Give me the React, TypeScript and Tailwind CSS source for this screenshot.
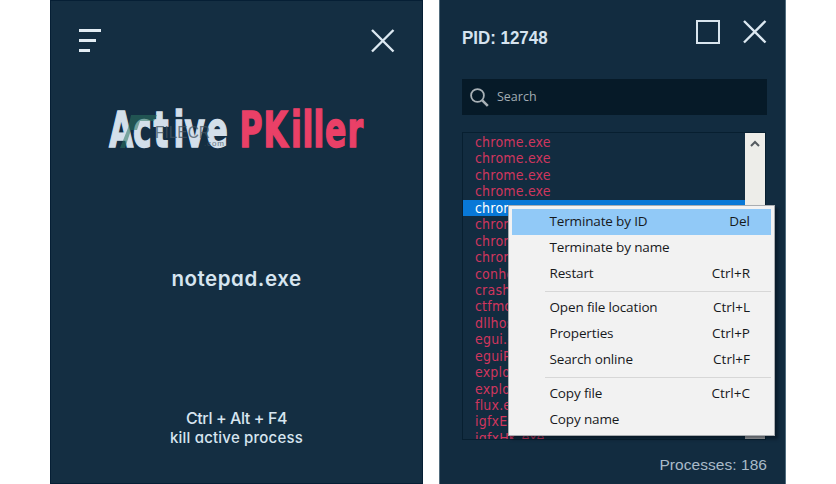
import React from "react";

const processes = [
  "chrome.exe", "chrome.exe", "chrome.exe", "chrome.exe", "chrome.exe",
  "chrome.exe", "chrome.exe", "chrome.exe", "conhost.exe", "crashpad.exe",
  "ctfmon.exe", "dllhost.exe", "egui.exe", "eguiProxy.exe", "explorer.exe",
  "explorer.exe", "flux.exe", "igfxEM.exe", "igfxHK.exe",
];

const menuGroups: [string, string][][] = [
  [["Terminate by ID", "Del"], ["Terminate by name", ""], ["Restart", "Ctrl+R"]],
  [["Open file location", "Ctrl+L"], ["Properties", "Ctrl+P"], ["Search online", "Ctrl+F"]],
  [["Copy file", "Ctrl+C"], ["Copy name", ""]],
];

const SQUEEZE = 0.7;
const place = (xs: number[]) => xs.map((x) => x / SQUEEZE).join(" ");

function Logo() {
  return (
    <svg width="272" height="48" viewBox="100 106 272 48" className="block overflow-visible">
      <g
        transform={`scale(${SQUEEZE} 1)`}
        fontSize="50"
        fontWeight="700"
        strokeWidth="1.4"
        strokeLinejoin="miter"
        className="font-['DejaVu_Sans_Condensed','DejaVu_Sans',sans-serif]"
      >
        <text x={place([109, 133, 153.500, 173.500, 184.5, 206.5])} y="147.500" fill="#d3dfea" stroke="#d3dfea">Active</text>
        <text x={place([239.5, 263.5, 291, 302.5, 313.5, 325, 347.5])} y="147.500" fill="#ea4067" stroke="#ea4067">PKiller</text>
      </g>
      <path d="M131 115h26l-3 6h-14l-3 9h-6l-6 18h-5l8-20z" fill="#2b7560" opacity=".55" />
      <g fill="#42525e" opacity=".75" className="font-['Liberation_Sans',sans-serif]">
        <text x="155" y="138" fontSize="17" textLength="55" lengthAdjust="spacingAndGlyphs">FILECR</text>
        <text x="204" y="145.500" fontSize="8" textLength="20">.com</text>
      </g>
    </svg>
  );
}

function CloseIcon() {
  return (
    <svg width="24" height="24" viewBox="0 0 24 24" stroke="#dce8f1" strokeWidth="2.400" className="block">
      <path d="M1 1l21.500 21.500M22.500 1L1 22.500" />
    </svg>
  );
}

function Launcher() {
  return (
    <section className="h-[484px] w-[373px] border border-[#061f35] bg-[#142e42] text-[#d7e5f0]">
      <header className="flex h-[103px] items-start justify-between pt-7 pl-7 pr-[27px]">
        <div className="flex flex-col gap-[7px]">
          <i className="h-[3px] w-[22px] bg-[#e3edf4]" />
          <i className="h-[3px] w-[17px] bg-[#e3edf4]" />
          <i className="h-[3px] w-[11px] bg-[#e3edf4]" />
        </div>
        <CloseIcon />
      </header>
      <div className="flex h-[54px] pt-[2px] pl-[49px]"><Logo /></div>
      <div className="mt-[105px] text-center font-[Inter,sans-serif] text-[20.5px] leading-8 font-semibold tracking-[0.55px] [font-feature-settings:'cv11'] [font-variant-ligatures:none]">
        notepad.exe
      </div>
      <div className="mt-[113px] text-center font-[Inter,sans-serif] text-[15px] leading-5 font-medium [font-feature-settings:'cv11']">
        <p className="text-[16px] tracking-[-0.4px]">Ctrl + Alt + F4</p>
        <p className="tracking-[0.2px]">kill active process</p>
      </div>
    </section>
  );
}

function ContextMenu() {
  return (
    <div className="absolute top-[205px] left-[68px] h-[231px] w-[267px] border border-[#a9adb1] bg-[#f2f2f2] px-[3px] pt-[3px] shadow-[3px_3px_3px_rgba(0,10,20,0.5)] font-['Open_Sans','Noto_Sans',sans-serif] text-[13.5px] tracking-[-0.15px] text-[#17191c]">
      {menuGroups.map((group, g) => (
        <React.Fragment key={g}>
          {g > 0 && <div className="ml-[33px] flex h-2 items-center"><div className="h-px w-full bg-[#d7d7d7]" /></div>}
          {group.map(([label, key], i) => (
            <div key={label} className={`flex h-[26px] items-center justify-between pr-[21px] pl-[37.5px] leading-6 ${g === 0 && i === 0 ? "bg-[#91c9f7]" : ""}`}>
              <span className="pb-0.5">{label}</span>
              <span className="pb-0.5 tracking-normal">{key}</span>
            </div>
          ))}
        </React.Fragment>
      ))}
    </div>
  );
}

function ProcessWindow() {
  return (
    <section className="relative flex h-[484px] w-[347px] flex-col border-x border-[#526d7e] bg-[#122c40] pl-[22px] pr-[18px]">
      <header className="flex h-[79px] items-start justify-between">
        <h1 className="pt-[26px] font-['Liberation_Sans',sans-serif] text-[18px] leading-6 font-bold text-[#d5e3ef]"><span className="inline-block origin-left scale-x-[.94]">PID: 12748</span></h1>
        <div className="flex gap-[23px] pt-5">
          <div className="h-6 w-6 border-2 border-[#d8e5ee]" />
          <CloseIcon />
        </div>
      </header>
      <div className="flex h-9 w-[305px] shrink-0 items-center bg-[#061a28] pl-2">
        <svg width="19" height="19" viewBox="0 0 19 19" fill="none" stroke="#a9b1b6" className="block">
          <circle cx="7.500" cy="7.500" r="6.400" strokeWidth="1.800" />
          <path d="M12.300 12.300l5.500 5.500" strokeWidth="2.600" />
        </svg>
        <span className="ml-2 font-['Open_Sans',sans-serif] text-[12.5px] text-[#a2acb3]">Search</span>
      </div>
      <div className="mt-[17px] flex h-[308px] w-[304px] shrink-0 border border-[#071f30]">
        <ul className="min-w-0 flex-1 overflow-hidden pt-px font-['DejaVu_Sans_Condensed','DejaVu_Sans',sans-serif] text-[14px] tracking-[0.2px]">
          {processes.map((name, i) => (
            <li key={i} className={`h-[16.45px] pl-3 leading-[16.45px] ${i === 4 ? "bg-[#0878d7] text-white" : "text-[#cf365e]"}`}>{name}</li>
          ))}
        </ul>
        <div className="flex w-5 flex-col items-center justify-between bg-[#edede9]">
          <svg width="10" height="8" viewBox="0 0 10 8" fill="none" stroke="#555b60" strokeWidth="2" className="mt-[7px] block"><path d="M1 6l4-4 4 4" /></svg>
          <div className="h-1 w-full bg-[#b5b5b7]" />
        </div>
      </div>
      <footer className="mt-[13px] flex h-6 justify-end font-['Liberation_Sans',sans-serif] text-[15.5px] leading-6 text-[#a9bac8]">
        <span className="tracking-[0.05px]">Processes: 186</span>
      </footer>
      <ContextMenu />
    </section>
  );
}

export default function App() {
  return (
    <main className="flex h-[484px] w-[836px] gap-4 overflow-hidden bg-white pl-[50px]">
      <Launcher />
      <ProcessWindow />
    </main>
  );
}
